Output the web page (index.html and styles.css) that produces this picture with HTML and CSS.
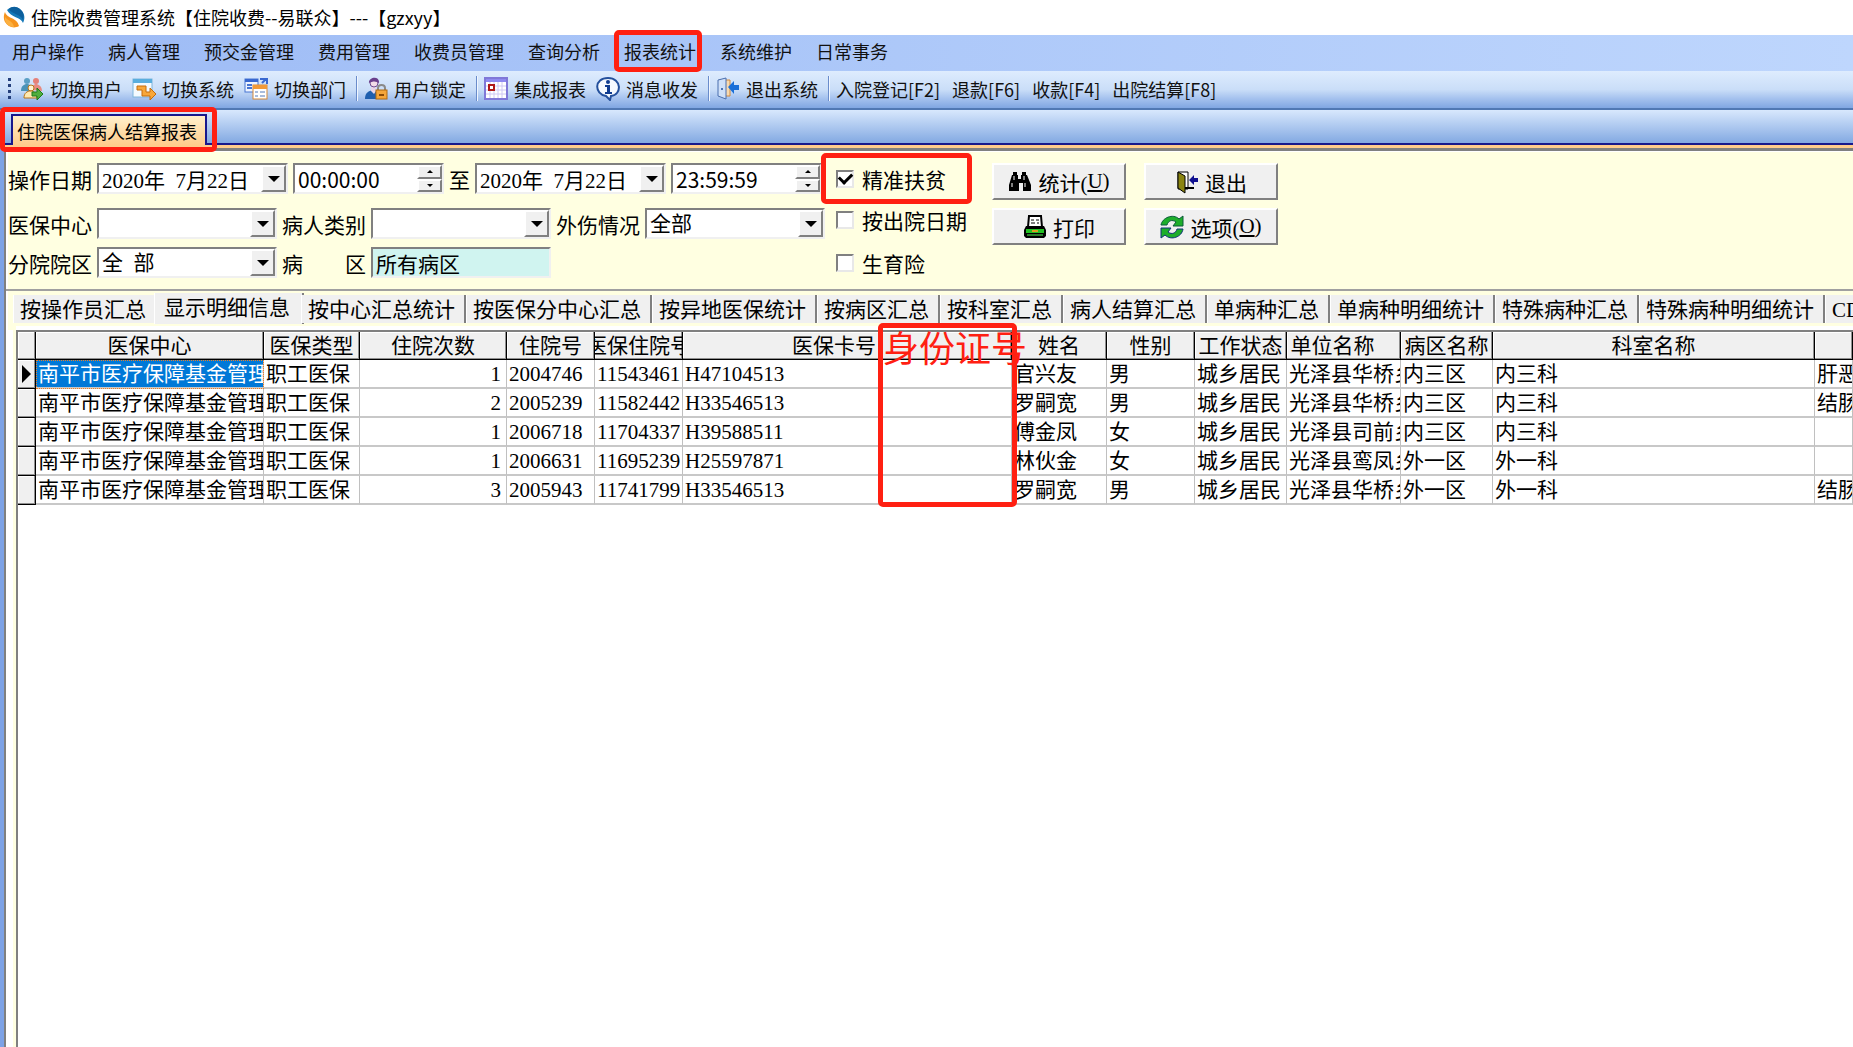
FILE: index.html
```html
<!DOCTYPE html>
<html lang="zh-CN">
<head>
  <meta charset="UTF-8">
  <title>住院收费管理系统</title>
  <link rel="stylesheet" href="styles.css">
</head>
<body>

  <header class="titlebar">
    <svg class="logo" viewBox="0 0 22 22">
      <path d="M4 4C8 0 15 0 19 5c3 4 3 8 1 12C18 11 8 12 4 4z" fill="#1578b8"/>
      <path d="M6 3c2 5 12 5 14 11 1-4 1-7-2-10C14 0 9 0 6 3z" fill="#0d5f9c"/>
      <path d="M2 6c2 7 12 5 14 14-5 3-11 1-14-4-2-4-1-8 0-10z" fill="#f7941d"/>
      <path d="M2 11c3 4 8 4 9 10-5 0-10-4-9-10z" fill="#fbb040"/>
    </svg>
    <span>住院收费管理系统【住院收费--易联众】---【gzxyy】</span>
  </header>

  <nav class="menubar">
    <a href="#">用户操作</a>
    <a href="#">病人管理</a>
    <a href="#">预交金管理</a>
    <a href="#">费用管理</a>
    <a href="#">收费员管理</a>
    <a href="#">查询分析</a>
    <a href="#" class="marked">报表统计</a>
    <a href="#">系统维护</a>
    <a href="#">日常事务</a>
  </nav>

  <div class="toolbar">
    <span class="grip"></span>
    <button class="tool">
      <svg viewBox="0 0 24 24">
        <circle cx="7" cy="4" r="3" fill="#5a9fc4"/><path d="M1 14c0-5 3-7 6-7s5 2 5 7z" fill="#4a93b8"/>
        <circle cx="16" cy="4" r="3" fill="#e58078"/><path d="M12 13c0-4 2-6 4-6s6 2 6 7z" fill="#e88a80"/>
        <circle cx="11" cy="11" r="3" fill="#fff3d0" stroke="#b87418"/><path d="M4 21c0-5 3-7 7-7 3 0 5 2 6 7z" fill="#ffe9b0" stroke="#b87418"/>
        <path d="M12 15h5v-4l6 6-6 6v-4h-5z" fill="#4fae3c" stroke="#1d7a1d"/>
      </svg>切换用户</button>
    <button class="tool">
      <svg viewBox="0 0 24 24">
        <rect x="1" y="2" width="19" height="18" fill="#f4faff" stroke="#7fb6dc"/><path d="M1 2h19v4H1z" fill="#5aaede"/>
        <path d="M5 9h9v6h4v-4l6 6-6 6v-4h-8v-6H5z" fill="#f8a73a" stroke="#c46d0c"/>
      </svg>切换系统</button>
    <button class="tool">
      <svg viewBox="0 0 24 24">
        <rect x="1" y="2" width="13" height="13" fill="#eef4ff" stroke="#4674d2"/><path d="M1 2h13v3H1z" fill="#3868d0"/><path d="M3 8h5M3 11h5" stroke="#4674d2" stroke-width="2"/>
        <path d="M16 2h7v5M22 2l-4 4" stroke="#3868d0" stroke-width="2" fill="none"/>
        <rect x="9" y="8" width="14" height="14" fill="#fff" stroke="#d58a3a"/><path d="M9 8h14v4H9z" fill="#f29a38"/><path d="M11 14h3v2h-3zM16 14h5v2h-5zM11 18h3v2h-3zM16 18h5v2h-5z" fill="#a8bcdc"/>
      </svg>切换部门</button>
    <span class="divider"></span>
    <button class="tool">
      <svg viewBox="0 0 24 24">
        <path d="M1 22c0-6 3-8 8-9 4 0 7 3 7 9z" fill="#1f5fae"/><path d="M7 10h5v4l-2 3-3-3z" fill="#e8d5e8"/>
        <circle cx="10" cy="6" r="4" fill="#f2dce8" stroke="#704a90"/><path d="M5 6c-1-6 11-8 10 0-3-2-6-2-10 0z" fill="#6a3f8c"/>
        <path d="M14 14v-3c0-4 7-4 7 0v3" fill="none" stroke="#8a8a8a" stroke-width="2"/><rect x="12" y="13" width="11" height="9" fill="#f5a63a" stroke="#b06a10"/><path d="M15 17h5v2h-5z" fill="#8a4a08"/>
      </svg>用户锁定</button>
    <span class="divider"></span>
    <button class="tool">
      <svg viewBox="0 0 24 24">
        <rect x="1" y="1" width="22" height="21" fill="#fff" stroke="#8078d8" stroke-width="2"/><path d="M2 2h20v3H2z" fill="#8f8af0"/>
        <path d="M2 9h20M2 13h20M2 17h20M6 5v16M10 5v16M14 5v16M18 5v16" stroke="#cfc8f4"/>
        <rect x="5" y="8" width="5" height="5" fill="#fff" stroke="#b01818" stroke-width="2"/>
      </svg>集成报表</button>
    <button class="tool">
      <svg viewBox="0 0 24 24">
        <path d="M12 1c14 0 14 17 3 18l-1 4-4-4C-2 17-2 1 12 1z" fill="#f6faff" stroke="#24509c" stroke-width="2"/>
        <circle cx="12" cy="5" r="2" fill="#103c90"/><path d="M9 8h5v7h2v2H9v-2h2v-5H9z" fill="#103c90"/>
      </svg>消息收发</button>
    <span class="divider"></span>
    <button class="tool">
      <svg viewBox="0 0 24 24">
        <path d="M3 3h11v16H3z" fill="#f6d9b0" stroke="#d08a40"/><path d="M2 3l8-2v21l-8-3z" fill="#cfe0f8" stroke="#4a6fae"/><circle cx="6" cy="12" r="1" fill="#24509c"/>
        <path d="M12 10l6-6v4h5v5h-5v4z" fill="#1a6fd8"/>
      </svg>退出系统</button>
    <span class="divider"></span>
    <button class="tool text">入院登记[F2]</button>
    <button class="tool text">退款[F6]</button>
    <button class="tool text">收款[F4]</button>
    <button class="tool text">出院结算[F8]</button>
  </div>

  <div class="window-tabs">
    <button class="window-tab marked">住院医保病人结算报表</button>
  </div>

  <main class="panel">
    <form class="filters">
      <div class="fields">
        <div class="row">
          <label for="dateFrom">操作日期</label>
          <div class="field date"><input id="dateFrom" type="text" value="2020年&nbsp; 7月22日"><button type="button" class="drop" aria-label="选择日期"></button></div>
          <div class="field time"><input type="text" value="00:00:00" aria-label="开始时间"><span class="spin"><button type="button" aria-label="加"></button><button type="button" aria-label="减"></button></span></div>
          <label for="dateTo">至</label>
          <div class="field date"><input id="dateTo" type="text" value="2020年&nbsp; 7月22日"><button type="button" class="drop" aria-label="选择日期"></button></div>
          <div class="field time"><input type="text" value="23:59:59" aria-label="结束时间"><span class="spin"><button type="button" aria-label="加"></button><button type="button" aria-label="减"></button></span></div>
        </div>
        <div class="row">
          <label for="center">医保中心</label>
          <div class="field combo"><select id="center"><option></option></select><span class="drop"></span></div>
          <label for="kind">病人类别</label>
          <div class="field combo"><select id="kind"><option></option></select><span class="drop"></span></div>
          <label for="injury">外伤情况</label>
          <div class="field combo"><select id="injury"><option>全部</option></select><span class="drop"></span></div>
        </div>
        <div class="row">
          <label for="branch">分院院区</label>
          <div class="field combo"><select id="branch"><option>全&nbsp;&nbsp;部</option></select><span class="drop"></span></div>
          <label for="ward" class="spread"><span>病</span><span>区</span></label>
          <div class="field combo ward"><input id="ward" type="text" value="所有病区"></div>
        </div>
      </div>

      <div class="checks">
        <label class="row marked"><input type="checkbox" checked>精准扶贫</label>
        <label class="row"><input type="checkbox">按出院日期</label>
        <label class="row"><input type="checkbox">生育险</label>
      </div>

      <div class="actions">
        <button type="button">
          <svg viewBox="0 0 24 24">
            <path d="M5 2h4v3h1v4h3V5h1V2h4v3h1l4 10v6h-8v-8h-4v8H1v-6L4 5h1z" fill="#000"/>
            <path d="M6 6v4M4 13v4M16 6v4M17 13v4" stroke="#fff"/>
          </svg>统计(<u>U</u>)</button>
        <button type="button">
          <svg viewBox="0 0 24 24">
            <path d="M3 2h10v17H3z" fill="#fff" stroke="#000"/><path d="M3 2l7 4v17l-7-5z" fill="#8a8410" stroke="#000"/>
            <path d="M10 18h9" stroke="#000" stroke-width="2"/><path d="M14 10l5-5v3h4v4h-4v3z" fill="#101090"/>
          </svg>退出</button>
        <button type="button">
          <svg viewBox="0 0 24 24">
            <path d="M6 1h12l1 11H5z" fill="#fff" stroke="#000" stroke-width="2"/><path d="M8 5h3M13 5h3M8 8h4M14 8h2" stroke="#000"/>
            <path d="M3 11h18l2 4v6l-2 2H3l-2-2v-6z" fill="#000"/><path d="M3 14h18v4H3z" fill="#22c022"/><path d="M9 15h6v2H9z" fill="#d8a020"/><path d="M4 20h16" stroke="#2a7a2a" stroke-width="2"/>
          </svg>打印</button>
        <button type="button">
          <svg viewBox="0 0 24 24">
            <path d="M1 10C2 3 13-2 19 4l4-3v10H13l3-4c-4-3-8-1-9 3z" fill="#1eae2a" stroke="#0a5a3a"/>
            <path d="M23 14c-1 8-12 12-18 6l-4 3V13h10l-3 4c4 3 8 1 9-3z" fill="#1eae2a" stroke="#10307a"/>
          </svg>选项(<u>O</u>)</button>
      </div>
    </form>

    <div class="tabs">
      <button>按操作员汇总</button>
      <button class="active">显示明细信息</button>
      <button>按中心汇总统计</button>
      <button>按医保分中心汇总</button>
      <button>按异地医保统计</button>
      <button>按病区汇总</button>
      <button>按科室汇总</button>
      <button>病人结算汇总</button>
      <button>单病种汇总</button>
      <button>单病种明细统计</button>
      <button>特殊病种汇总</button>
      <button>特殊病种明细统计</button>
      <button>CD</button>
    </div>

    <div class="grid">
      <table>
        <colgroup>
          <col class="c-mark"><col class="c-center"><col class="c-type"><col class="c-times"><col class="c-no"><col class="c-no">
          <col class="c-card"><col class="c-name"><col class="c-sex"><col class="c-state"><col class="c-unit"><col class="c-state"><col class="c-dept"><col>
        </colgroup>
        <thead>
          <tr>
            <th></th>
            <th><div>医保中心</div></th>
            <th><div>医保类型</div></th>
            <th><div>住院次数</div></th>
            <th><div>住院号</div></th>
            <th><div>医保住院号</div></th>
            <th><div class="card">医保卡号</div></th>
            <th><div>姓名</div></th>
            <th><div>性别</div></th>
            <th><div>工作状态</div></th>
            <th><div class="unit">单位名称</div></th>
            <th><div>病区名称</div></th>
            <th><div>科室名称</div></th>
            <th></th>
          </tr>
        </thead>
        <tbody id="rows"></tbody>
      </table>
      <div class="note">身份证号</div>
    </div>
  </main>

  <script>
    const rows = [
      ['1', '2004746', '11543461', 'H47104513', '官兴友', '男', '光泽县华桥乡', '内三区', '内三科', '肝恶'],
      ['2', '2005239', '11582442', 'H33546513', '罗嗣宽', '男', '光泽县华桥乡', '内三区', '内三科', '结肠'],
      ['1', '2006718', '11704337', 'H39588511', '傅金凤', '女', '光泽县司前乡', '内三区', '内三科', ''],
      ['1', '2006631', '11695239', 'H25597871', '林伙金', '女', '光泽县鸾凤乡', '外一区', '外一科', ''],
      ['3', '2005943', '11741799', 'H33546513', '罗嗣宽', '男', '光泽县华桥乡', '外一区', '外一科', '结肠']
    ];

    document.getElementById('rows').innerHTML = rows.map((r, i) => `
      <tr>
        <th>${i === 0 ? '<span class="pointer"></span>' : ''}</th>
        <td class="${i === 0 ? 'selected' : ''}">南平市医疗保障基金管理</td>
        <td>职工医保</td>
        <td class="right">${r[0]}</td>
        <td>${r[1]}</td>
        <td>${r[2]}</td>
        <td>${r[3]}</td>
        <td>${r[4]}</td>
        <td>${r[5]}</td>
        <td>城乡居民</td>
        <td>${r[6]}</td>
        <td>${r[7]}</td>
        <td>${r[8]}</td>
        <td>${r[9]}</td>
      </tr>
    `).join('');
  </script>

</body>
</html>
```
FILE: styles.css
```css
* {
  box-sizing: border-box;
}

body {
  margin: 0;
  min-height: 100vh;
  display: flex;
  flex-direction: column;
  overflow-x: hidden;
  background: #fff;
  color: #000;
  font-family: "Noto Sans CJK SC", sans-serif;
  font-size: 18px;
}

button,
input,
select {
  font: inherit;
  color: inherit;
  margin: 0;
  padding: 0;
  border: none;
  background: none;
}

.titlebar {
  display: flex;
  align-items: center;
  gap: 6px;
  height: 35px;
  padding: 0 0 2px 3px;
}

.logo {
  width: 22px;
  height: 22px;
}

.menubar {
  display: flex;
  align-items: center;
  gap: 24px;
  height: 36px;
  padding: 0 0 4px 12px;
  background: linear-gradient(to right, #9dbbf5, #bed6fd);
}

.menubar a {
  color: #111;
  text-decoration: none;
}

/* red frames around the marked items */
.marked {
  position: relative;
}

.marked::after {
  content: "";
  position: absolute;
  inset: -8px -6px -8px -10px;
  border: 5px solid #ff2012;
  border-radius: 5px;
  pointer-events: none;
  z-index: 2;
}

.toolbar {
  display: flex;
  align-items: center;
  height: 39px;
  padding: 0 0 2px 8px;
  border-bottom: 2px solid #5078b4;
  background: linear-gradient(#deecfe, #cadef8 50%, #a4c1ee 75%, #80a6e2);
}

.grip {
  width: 3px;
  height: 22px;
  margin-right: 9px;
  background: repeating-linear-gradient(#24407c 0 3px, transparent 3px 6px);
}

.tool {
  display: flex;
  align-items: center;
  gap: 6px;
  margin-right: 10px;
  color: #111;
  white-space: nowrap;
}

.tool.text {
  margin-right: 12px;
}

.tool svg {
  width: 24px;
  height: 24px;
}

.divider {
  width: 2px;
  height: 25px;
  margin-right: 6px;
  border-left: 1px solid #6a8ccb;
  background: #f0f6ff;
}

.window-tabs {
  display: flex;
  align-items: flex-end;
  height: 38px;
  padding-left: 11px;
  border-bottom: 3px solid #ffcc8c;
  background: linear-gradient(#d8e8fd, #83a9e2 33px, #18188c 33px);
}

.window-tab {
  height: 31px;
  padding: 0 8px 0 4px;
  border: 2px solid #18188c;
  border-bottom: none;
  background: linear-gradient(#fff0cc, #ffcc8c);
  line-height: 26px;
}

.window-tab.marked::after {
  inset: -9px -12px -7px -13px;
}

.panel {
  flex: 1;
  display: flex;
  flex-direction: column;
  border-top: 3px solid #808080;
  border-left: 2px solid #808080;
  margin-left: 4px;
  background: #ffffe1;
  box-shadow: -4px 0 #7da2e6, inset 2px 1px #fff;
  font-family: "Liberation Serif", "Noto Sans CJK SC", serif;
  font-size: 21px;
}

.filters {
  display: flex;
  height: 140px;
  padding: 12px 0 0 2px;
  border-bottom: 2px solid #a0a0a0;
}

.row {
  display: flex;
  align-items: center;
  gap: 5px;
  height: 31px;
  white-space: nowrap;
}

.row:nth-child(2) {
  margin: 14px 0 8px;
}

.spread {
  display: flex;
  justify-content: space-between;
  width: 84px;
}

.field {
  display: flex;
  height: 31px;
  border: 2px solid #808080;
  border-right-color: #f0f0f0;
  border-bottom-color: #f0f0f0;
  background: #fff;
}

.field input,
.field select {
  flex: 1;
  min-width: 0;
  padding-left: 3px;
  appearance: none;
  outline: none;
}

.date {
  width: 191px;
}

.time {
  width: 151px;
  font-family: "Noto Sans CJK SC", sans-serif;
}

.combo {
  width: 180px;
}

.ward {
  background: #d0f4f0;
}

.drop,
.spin button {
  display: flex;
  align-items: center;
  justify-content: center;
  width: 25px;
  border: 2px solid #fff;
  border-right-color: #808080;
  border-bottom-color: #808080;
  background: #f0f0f0;
}

.drop::before,
.spin button::before {
  content: "";
  border: 6px solid transparent;
  border-top-color: #000;
  border-bottom: none;
}

.spin {
  display: flex;
  flex-direction: column;
}

.spin button {
  flex: 1;
}

.spin button::before {
  border-width: 3px;
}

.spin button:first-child::before {
  border-top: none;
  border-bottom: 3px solid #000;
}

.checks {
  margin-left: 11px;
}

.checks .row {
  gap: 8px;
}

.checks .row:nth-child(2) {
  margin: 10px 0 12px;
}

.checks .marked::after {
  inset: -10px -5px -10px -15px;
}

.checks input {
  appearance: none;
  display: flex;
  align-items: center;
  justify-content: center;
  width: 18px;
  height: 18px;
  border: 2px solid #808080;
  border-right-color: #e8e8e8;
  border-bottom-color: #e8e8e8;
  background: #fff;
}

.checks input:checked::before {
  content: "";
  width: 10px;
  height: 6px;
  border: 3px solid #000;
  border-top: none;
  border-right: none;
  transform: rotate(-45deg) translate(1px, -1px);
}

.actions {
  display: grid;
  grid-template-columns: 134px 134px;
  grid-auto-rows: 37px;
  gap: 8px 18px;
  margin-left: 25px;
}

.actions button {
  display: flex;
  align-items: center;
  justify-content: center;
  border: 2px solid #fff;
  border-right-color: #808080;
  border-bottom-color: #808080;
  background: #f0f0f0;
}

.actions svg {
  width: 24px;
  height: 24px;
  margin-right: 6px;
}

.tabs {
  display: flex;
  height: 36px;
  padding: 4px 0 0 7px;
  overflow: hidden;
}

.tabs button {
  flex: none;
  height: 28px;
  padding: 2px 9px 0 6px;
  border-left: 1px solid #fff;
  border-right: 2px solid #808080;
  background: #f0f0f0;
  line-height: 26px;
}

.tabs button:first-child {
  border-right-color: #f0f0f0;
  padding-right: 6px;
}

.tabs .active {
  height: 31px;
  margin: -2px -3px 0 0;
  padding: 0 12px 2px 9px;
}

.grid {
  position: relative;
  flex: 1;
  margin: 3px 0 0 10px;
  border-top: 2px solid #808080;
  border-left: 2px solid #808080;
  background: #fff;
  box-shadow: 0 -4px #fff, 0 -3px #ffffe1, -3px 0 #ffffe1, -9px 0 #fff;
}

table {
  width: 100%;
  table-layout: fixed;
  border-spacing: 0;
}

.c-mark { width: 18px; }
.c-center { width: 228px; }
.c-type { width: 96px; }
.c-times { width: 147px; }
.c-no { width: 88px; }
.c-card { width: 329px; }
.c-name { width: 95px; }
.c-sex { width: 88px; }
.c-state { width: 92px; }
.c-unit { width: 114px; }
.c-dept { width: 322px; }

th {
  height: 29px;
  padding: 0;
  border-right: 1px solid #000;
  border-bottom: 1px solid #000;
  background: #f0f0f0;
  box-shadow: inset -1px -1px #909090, inset 1px 1px #fff;
  font-weight: normal;
  line-height: 24px;
}

thead th {
  height: 28px;
}

th div {
  display: flex;
  justify-content: center;
  overflow: hidden;
  white-space: nowrap;
}

.card {
  padding-right: 26px;
}

.unit {
  padding-right: 22px;
}

td {
  height: 29px;
  padding: 0 0 0 2px;
  border-right: 1px solid #c0c0c0;
  border-bottom: 2px solid #c8c8c8;
  line-height: 24px;
  white-space: nowrap;
  overflow: hidden;
}

td.right {
  padding-right: 5px;
  text-align: right;
}

.selected {
  background: #0078d7;
  color: #fff;
  outline: 1px dotted #f08020;
  outline-offset: -1px;
}

.pointer {
  display: block;
  width: 0;
  margin-left: 4px;
  border: 9px solid transparent;
  border-left-color: #000;
  border-right: none;
}

/* handwritten-style remark over the id number column */
.note {
  position: absolute;
  top: -9px;
  left: 860px;
  width: 139px;
  height: 184px;
  border: 5px solid #ff2012;
  border-radius: 5px;
  color: #ff2012;
  font-family: "Noto Sans CJK SC", sans-serif;
  font-size: 36px;
  line-height: 36px;
  white-space: nowrap;
}
```
